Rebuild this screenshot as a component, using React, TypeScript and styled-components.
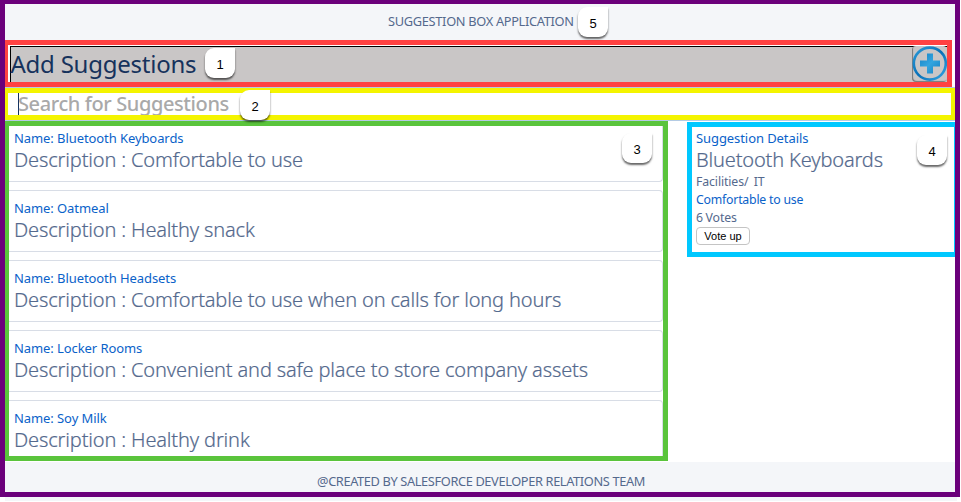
import React from "react";
import styled, { createGlobalStyle } from "styled-components";

const Global = createGlobalStyle`
  * { box-sizing: border-box; }
  body { margin: 0; background: #fff; overflow: hidden; font-family: "Noto Sans", "Open Sans", sans-serif; color: #54698d; }
  p, h1, h2 { margin: 0; }
`;

const Page = styled.div`
  position: relative;
  width: 961px;
  height: 502px;
`;

const Frame = styled.div`
  width: 960px;
  height: 497px;
  border: solid #6b007b;
  border-width: 4px 5px 5px;
  display: flex;
  flex-direction: column;
`;

const Under = styled.div`
  width: 952px;
  height: 4px;
  margin-left: 5px;
  background: #f4f6f9;
`;

const Bar = styled.div<{ $height: number; $top: number }>`
  flex: none;
  height: ${(p) => p.$height}px;
  padding-top: ${(p) => p.$top}px;
  background: #f4f6f9;
`;

const BarText = styled.p<{ $left: number; $spacing: number }>`
  padding-left: ${(p) => p.$left}px;
  font-size: 12.8px;
  line-height: 18px;
  letter-spacing: ${(p) => p.$spacing}px;
  white-space: nowrap;
`;

const AddSection = styled.section`
  flex: none;
  width: 947px;
  height: 47px;
  border: 5px solid #ff4242;
  border-left-width: 3px;
  padding: 1px 0 0 2px;
`;

const AddPanel = styled.div`
  height: 36px;
  display: flex;
  justify-content: space-between;
  background: #c9c6c6;
  border: solid #000;
  border-width: 1px 0 0 1px;
`;

const AddTitle = styled.h1`
  color: #16325c;
  font-size: 24px;
  font-weight: 400;
  line-height: 34px;
  letter-spacing: -0.24px;
  text-indent: -0.5px;
  white-space: nowrap;
`;

const AddButton = styled.button`
  width: 35px;
  height: 36px;
  margin-top: -1px;
  padding: 0;
  border: 0;
  border-radius: 4px;
  background: #c9c6c6;
  box-shadow: inset 1px -1px 1px #777;
  svg { display: block; }
`;

const SearchSection = styled.section`
  flex: none;
  height: 34px;
  border: solid #b4cbe4;
  border-width: 1px 0;
`;

const SearchFrame = styled.div`
  height: 32px;
  border: solid #f4f400;
  border-width: 5px 4px 5px 3px;
  padding-left: 10px;
  overflow: hidden;
`;

const SearchText = styled.div`
  height: 22px;
  border-left: 1px solid #16325c;
  color: #a9a9a9;
  font-size: 20px;
  font-weight: 500;
  line-height: 22px;
  letter-spacing: -0.4px;
  text-indent: -1px;
  white-space: nowrap;
`;

const Content = styled.main`
  flex: none;
  height: 341px;
  display: flex;
  align-items: flex-start;
  gap: 19px;
`;

const List = styled.section`
  width: 663px;
  height: 340px;
  border: 5px solid #5ac43c;
  border-left-width: 4px;
  overflow: hidden;
  display: flex;
  flex-direction: column;
  gap: 8px;
`;

const Card = styled.article`
  flex: none;
  height: 62px;
  padding: 8px 5px 0;
  border: 1px solid #d8dde6;
  border-left: 0;
  border-radius: 0 4px 4px 0;
  &:first-child { height: 56px; padding-top: 3px; border-top: 0; border-top-right-radius: 0; }
`;

const Link = styled.p<{ $small?: boolean }>`
  color: #0a62c9;
  font-size: ${(p) => (p.$small ? 12.3 : 13)}px;
  line-height: ${(p) => (p.$small ? 17 : 18)}px;
  padding-top: ${(p) => (p.$small ? 1 : 0)}px;
  letter-spacing: ${(p) => (p.$small ? -0.22 : -0.08)}px;
  white-space: nowrap;
`;

const Heading = styled.h2`
  font-size: 20px;
  font-weight: 300;
  line-height: 25px;
  letter-spacing: -0.15px;
  -webkit-text-stroke: 0.2px #54698d;
  white-space: nowrap;
`;

const Meta = styled.p`
  padding-top: 1px;
  font-size: 12.3px;
  line-height: 17px;
  letter-spacing: -0.12px;
  word-spacing: -0.4px;
  white-space: nowrap;
`;

const Details = styled.aside`
  width: 268px;
  height: 135px;
  margin-top: 1px;
  border: 5px solid #00c8ff;
  border-right-width: 1px;
  padding: 2px 0 0 4px;
`;

const VoteButton = styled.button`
  display: block;
  width: 54px;
  height: 18px;
  margin-top: 1px;
  padding: 0;
  border: 1px solid #c4c4c4;
  border-radius: 4px;
  background: #fff;
  color: #000;
  font: 11px/16px "Liberation Sans", sans-serif;
`;

const Badge = styled.span<{ $x: number; $y: number }>`
  position: absolute;
  left: ${(p) => p.$x}px;
  top: ${(p) => p.$y}px;
  width: 30px;
  height: 30px;
  border-radius: 9px 0 9px 9px;
  background: #fff;
  box-shadow: 0 2px 2px rgba(0, 0, 0, 0.6);
  color: #000;
  font: 13px/33px "Liberation Sans", sans-serif;
  text-align: center;
`;

const items = [
  { name: "Bluetooth Keyboards", text: "Comfortable to use" },
  { name: "Oatmeal", text: "Healthy snack" },
  { name: "Bluetooth Headsets", text: "Comfortable to use when on calls for long hours" },
  { name: "Locker Rooms", text: "Convenient and safe place to store company assets" },
  { name: "Soy Milk", text: "Healthy drink" },
];

const badges = [
  { label: 1, x: 205, y: 48 },
  { label: 2, x: 240, y: 90 },
  { label: 3, x: 622, y: 133 },
  { label: 4, x: 917, y: 135 },
  { label: 5, x: 578, y: 7 },
];

function PlusIcon() {
  return (
    <svg width="35" height="36" viewBox="0 0 35 36">
      <defs>
        <linearGradient id="ring" x1="0" y1="0" x2="1" y2="1">
          <stop offset="0" stopColor="#2d9bd8" />
          <stop offset=".5" stopColor="#0871b9" />
          <stop offset="1" stopColor="#35a5e2" />
        </linearGradient>
        <linearGradient id="plus" x1="0" y1="0" x2="1" y2="1">
          <stop offset="0" stopColor="#1681c4" />
          <stop offset=".5" stopColor="#33a5df" />
          <stop offset="1" stopColor="#1681c4" />
        </linearGradient>
      </defs>
      <circle cx="17.8" cy="17.6" r="16" fill="none" stroke="url(#ring)" strokeWidth="2.6" />
      <path d="M15 7.6h6v7h7v6h-7v7h-6v-7h-7v-6h7z" fill="url(#plus)" />
    </svg>
  );
}

export default function App() {
  return (
    <Page>
      <Global />
      <Frame>
        <Bar $height={36} $top={8}>
          <BarText $left={383} $spacing={-0.31}>SUGGESTION BOX APPLICATION</BarText>
        </Bar>
        <AddSection>
          <AddPanel>
            <AddTitle>Add Suggestions</AddTitle>
            <AddButton aria-label="Add"><PlusIcon /></AddButton>
          </AddPanel>
        </AddSection>
        <SearchSection>
          <SearchFrame>
            <SearchText>Search for Suggestions</SearchText>
          </SearchFrame>
        </SearchSection>
        <Content>
          <List>
            {items.map((item) => (
              <Card key={item.name}>
                <Link>Name: {item.name}</Link>
                <Heading>Description : {item.text}</Heading>
              </Card>
            ))}
          </List>
          <Details>
            <Link>Suggestion Details</Link>
            <Heading>Bluetooth Keyboards</Heading>
            <Meta>Facilities/&nbsp; IT</Meta>
            <Link $small>Comfortable to use</Link>
            <Meta>6 Votes</Meta>
            <VoteButton>Vote up</VoteButton>
          </Details>
        </Content>
        <Bar $height={30} $top={10}>
          <BarText $left={312} $spacing={-0.37}>@CREATED BY SALESFORCE DEVELOPER RELATIONS TEAM</BarText>
        </Bar>
      </Frame>
      <Under />
      {badges.map((b) => (
        <Badge key={b.label} $x={b.x} $y={b.y}>{b.label}</Badge>
      ))}
    </Page>
  );
}
